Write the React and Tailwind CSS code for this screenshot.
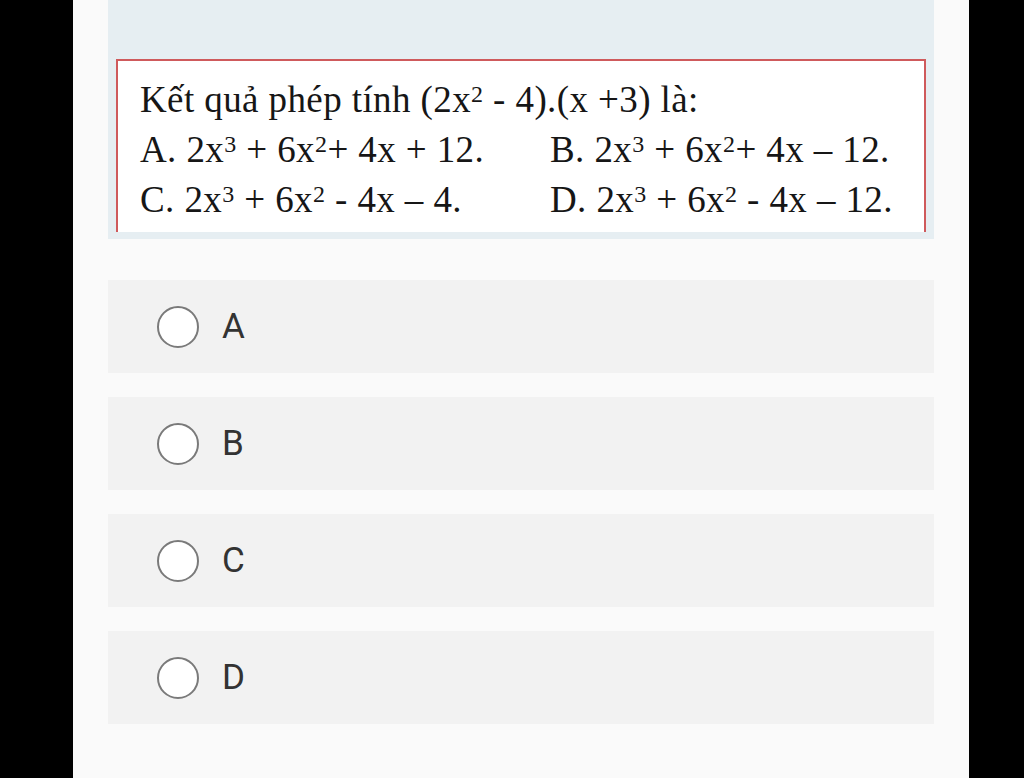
export default function App() {
  const sup = "text-[24px] relative top-[-10px] leading-none align-baseline";
  const X = ({ p }) => (
    <>
      x<span className={sup}>{p}</span>
    </>
  );
  const options = ["A", "B", "C", "D"];
  return (
    <div className="flex min-h-[778px] w-[1024px] bg-black">
      <div className="w-[73px] shrink-0" />
      <div className="w-[896px] shrink-0 bg-[#fafafa] px-[35px]">
        <div className="h-[239px] bg-[#e6eef2] pt-[59px] px-[8px]">
          <div
            className="h-[173px] bg-white border-t-2 border-l-2 border-r-2 border-[#cf5a5c] pl-[22px] pt-[14px] text-[#161616] text-[37px] tracking-[0.4px] leading-[50px] overflow-hidden"
            style={{ fontFamily: '"Liberation Serif", "Times New Roman", serif' }}
          >
            <div className="whitespace-nowrap">
              Kết quả phép tính (2<X p="2" /> - 4).(x +3) là:
            </div>
            <div className="grid grid-cols-[410px_1fr] whitespace-nowrap">
              <div>
                A. 2<X p="3" /> + 6<X p="2" />+ 4x + 12.
              </div>
              <div>
                B. 2<X p="3" /> + 6<X p="2" />+ 4x – 12.
              </div>
              <div>
                C. 2<X p="3" /> + 6<X p="2" /> - 4x – 4.
              </div>
              <div>
                D. 2<X p="3" /> + 6<X p="2" /> - 4x – 12.
              </div>
            </div>
          </div>
        </div>
        <div className="flex flex-col gap-[24px] pt-[41px]">
          {options.map((o) => (
            <div
              key={o}
              className="h-[93px] bg-[#f2f2f2] flex items-center pl-[49px]"
            >
              <div className="w-[42px] h-[42px] rounded-full border-2 border-[#7a7a7a] bg-white shrink-0" />
              <span
                className="ml-[23px] text-[35px] text-[#333333] leading-none"
                style={{ fontFamily: 'Roboto, "Noto Sans", sans-serif' }}
              >
                {o}
              </span>
            </div>
          ))}
        </div>
      </div>
    </div>
  );
}
